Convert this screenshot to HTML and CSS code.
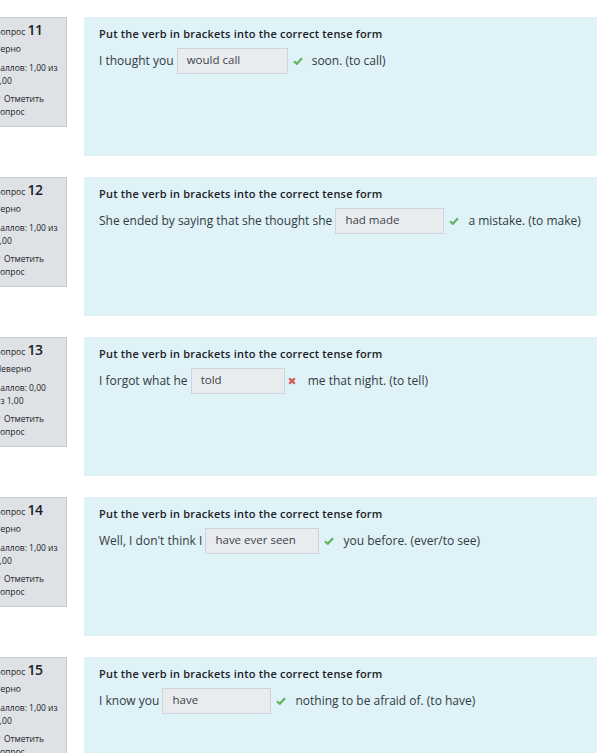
FILE: index.html
```html
<!DOCTYPE html>
<html lang="ru">
<head>
<meta charset="utf-8">
<link rel="stylesheet" href="styles.css">
</head>
<body>
<div class="page">

  <div class="que">
    <div class="info">
      <div class="no">Вопрос <span class="qno">11</span></div>
      <div class="state">Верно</div>
      <div class="grade">Баллов: 1,00 из<br>1,00</div>
      <div class="flag"><span class="tri"></span>Отметить<br>вопрос</div>
    </div>
    <div class="content">
      <div class="qtext">Put the verb in brackets into the correct tense form</div>
      <div class="line">I thought you <span class="ans" style="width:111px">would call</span><svg class="ok" viewBox="0 0 10 8"><path d="M1 4.2 L3.8 6.8 L9 1.2"/></svg><span class="rest">soon. (to call)</span></div>
    </div>
  </div>

  <div class="que">
    <div class="info">
      <div class="no">Вопрос <span class="qno">12</span></div>
      <div class="state">Верно</div>
      <div class="grade">Баллов: 1,00 из<br>1,00</div>
      <div class="flag"><span class="tri"></span>Отметить<br>вопрос</div>
    </div>
    <div class="content">
      <div class="qtext">Put the verb in brackets into the correct tense form</div>
      <div class="line">She ended by saying that she thought she <span class="ans" style="width:109px">had made</span><svg class="ok" viewBox="0 0 10 8"><path d="M1 4.2 L3.8 6.8 L9 1.2"/></svg><span class="rest">a mistake. (to make)</span></div>
    </div>
  </div>

  <div class="que">
    <div class="info">
      <div class="no">Вопрос <span class="qno">13</span></div>
      <div class="state">Неверно</div>
      <div class="grade">Баллов: 0,00<br>из 1,00</div>
      <div class="flag"><span class="tri"></span>Отметить<br>вопрос</div>
    </div>
    <div class="content">
      <div class="qtext">Put the verb in brackets into the correct tense form</div>
      <div class="line">I forgot what he <span class="ans" style="width:94px">told</span><svg class="bad" viewBox="0 0 8 8"><path d="M1.2 1.2 L6.8 6.8 M6.8 1.2 L1.2 6.8"/></svg><span class="rest">me that night. (to tell)</span></div>
    </div>
  </div>

  <div class="que">
    <div class="info">
      <div class="no">Вопрос <span class="qno">14</span></div>
      <div class="state">Верно</div>
      <div class="grade">Баллов: 1,00 из<br>1,00</div>
      <div class="flag"><span class="tri"></span>Отметить<br>вопрос</div>
    </div>
    <div class="content">
      <div class="qtext">Put the verb in brackets into the correct tense form</div>
      <div class="line">Well, I don't think I <span class="ans" style="width:114px">have ever seen</span><svg class="ok" viewBox="0 0 10 8"><path d="M1 4.2 L3.8 6.8 L9 1.2"/></svg><span class="rest">you before. (ever/to see)</span></div>
    </div>
  </div>

  <div class="que">
    <div class="info">
      <div class="no">Вопрос <span class="qno">15</span></div>
      <div class="state">Верно</div>
      <div class="grade">Баллов: 1,00 из<br>1,00</div>
      <div class="flag"><span class="tri"></span>Отметить<br>вопрос</div>
    </div>
    <div class="content">
      <div class="qtext">Put the verb in brackets into the correct tense form</div>
      <div class="line">I know you <span class="ans" style="width:109px">have</span><svg class="ok" viewBox="0 0 10 8"><path d="M1 4.2 L3.8 6.8 L9 1.2"/></svg><span class="rest">nothing to be afraid of. (to have)</span></div>
    </div>
  </div>

</div>
</body>
</html>
```

FILE: styles.css
```css
html, body {
  margin: 0;
  padding: 0;
  background: #ffffff;
  overflow: hidden;
}
body {
  font-family: "Open Sans", "Noto Sans", sans-serif;
  color: #1d2125;
}
.page {
  margin-left: -12px;
  padding-top: 17px;
  width: 640px;
}
.que {
  display: flex;
  align-items: flex-start;
  gap: 17px;
  margin-bottom: 21px;
}
.info {
  width: 66px;
  height: 103px;
  flex: none;
  box-sizing: content-box;
  background: #dee2e6;
  border: 1px solid #c4c9ce;
  padding: 5px 5px 0 6px;
  font-size: 8.5px;
  line-height: 13px;
  color: #1d2125;
}
.no {
  font-size: 8.5px;
  line-height: 14px;
}
.qno {
  font-size: 14px;
  font-weight: 600;
  letter-spacing: -0.5px;
}
.state {
  margin-top: 3px;
}
.grade {
  margin-top: 6px;
}
.flag {
  margin-top: 5px;
}
.tri {
  display: inline-block;
  width: 0;
  height: 0;
  border-left: 3px solid transparent;
  border-right: 3px solid transparent;
  border-top: 4px solid #9aa0a6;
  margin-right: 3px;
  vertical-align: 1px;
}
.content {
  flex: none;
  width: 560px;
  height: 139px;
  box-sizing: border-box;
  background: #def2f8;
  padding: 9px 15px;
}
.qtext {
  font-size: 11px;
  font-weight: 600;
  line-height: 14px;
  color: #1d2125;
  margin-top: 1px;
  letter-spacing: 0.2px;
}
.line {
  margin-top: 7px;
  font-size: 12px;
  line-height: 26px;
  color: #343a40;
  display: flex;
  align-items: center;
  white-space: pre;
}
.ans {
  display: inline-block;
  box-sizing: border-box;
  height: 26px;
  line-height: 22px;
  padding: 0 9px;
  font-size: 11.5px;
  background: #e9ecef;
  border: 1px solid #ced4da;
  color: #3d434a;
  margin-left: 0;
  margin-top: -1px;
}
.ok {
  width: 10px;
  height: 8px;
  flex: none;
  margin-left: 5px;
  margin-right: 9px;
  fill: none;
  stroke: #5cb85c;
  stroke-width: 2.2;
}
.bad {
  width: 8px;
  height: 8px;
  flex: none;
  margin-left: 3px;
  margin-right: 12px;
  fill: none;
  stroke: #d9534f;
  stroke-width: 2.2;
}
```
